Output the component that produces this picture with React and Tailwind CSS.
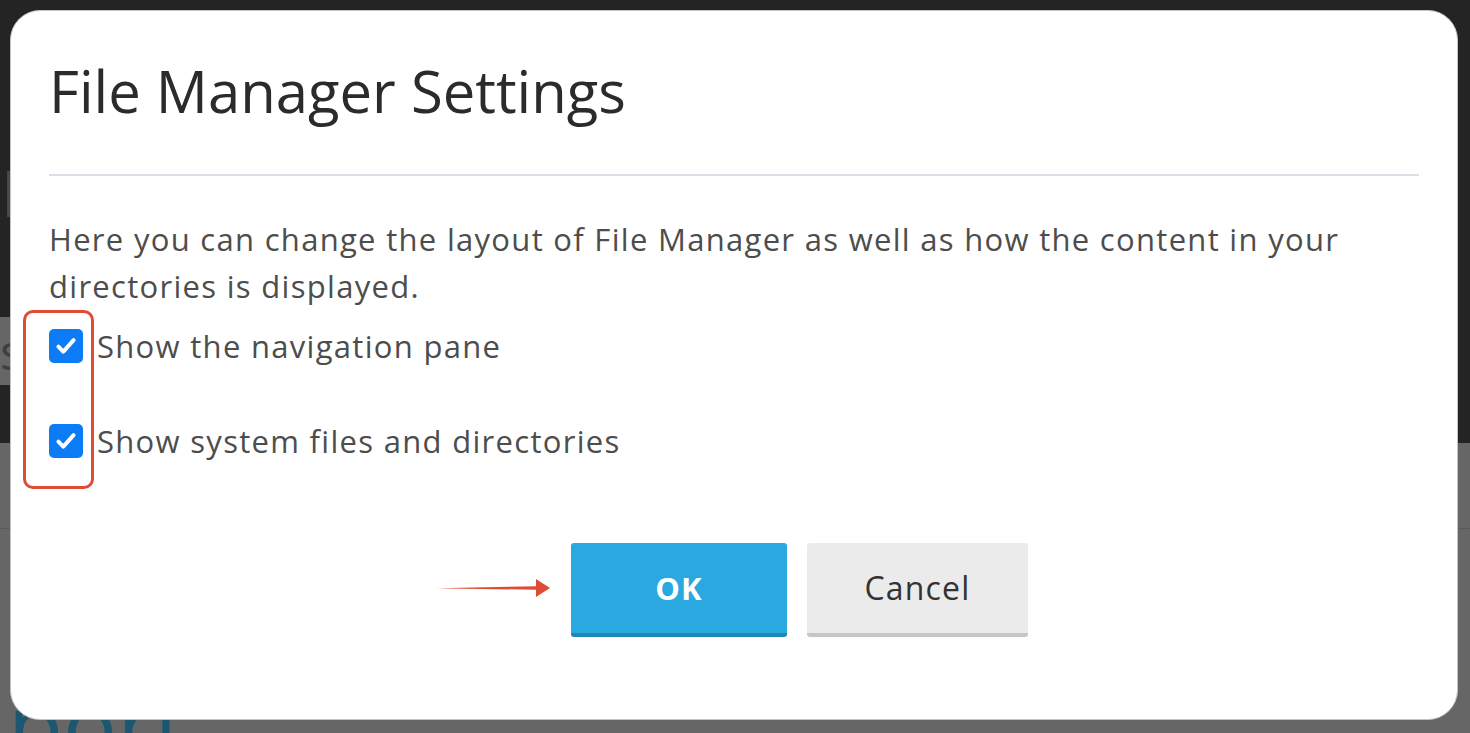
import { useState } from 'react';

function Check({ checked, onChange, label }) {
  return (
    <label className="flex items-center gap-[14px] cursor-pointer select-none">
      <span
        onClick={onChange}
        className={`flex h-[34px] w-[34px] shrink-0 items-center justify-center rounded-[5px] ${
          checked ? 'bg-[#0b7cf5]' : 'bg-white border-2 border-[#888]'
        }`}
      >
        {checked && (
          <svg viewBox="0 0 24 24" className="h-[28px] w-[28px]" fill="none">
            <path d="M5.5 12.5l4.2 4.3L18.5 7" stroke="white" strokeWidth="3.4" strokeLinecap="round" strokeLinejoin="round" />
          </svg>
        )}
      </span>
      <span className="text-[31px] tracking-[1.3px] text-[#4d4d4d]">{label}</span>
    </label>
  );
}

export default function App() {
  const [nav, setNav] = useState(true);
  const [sys, setSys] = useState(true);

  return (
    <div className="relative h-[733px] w-[1470px] overflow-hidden bg-[#666666]" style={{ fontFamily: '"Open Sans", "Noto Sans", sans-serif' }}>
      {/* backdrop page */}
      <div className="flex h-full flex-col">
        <div className="h-[317px] bg-[#242424]">
          <div className="pt-[150px] pl-[2px] text-[60px] leading-none text-[#4a4a4a]">p</div>
        </div>
        <div className="flex h-[68px]">
          <div className="w-[30px] bg-[#666666] text-[50px] leading-[68px] text-[#3e3e3e]">s</div>
          <div className="flex-1 bg-[#242424]" />
        </div>
        <div className="h-[58px] bg-[#242424]" />
        <div className="flex flex-1 flex-col justify-end">
          <div className="h-[1px] bg-[#5a5a5a] mb-[164px]" />
          <div className="pl-[8px] text-[90px] leading-[60px] text-[#1d5670] -mb-[20px]">port</div>
        </div>
      </div>

      {/* modal */}
      <div className="absolute left-[10px] top-[10px] h-[710px] w-[1448px] rounded-[30px] border border-[#c4c4c4] bg-white px-[38px]">
        <h1 className="pt-[44px] text-[58px] leading-[72px] text-[#2b2b2b]">File Manager Settings</h1>
        <div className="mt-[47px] h-[2px] bg-[#dedde8]" />
        <p className="mt-[40px] pr-[30px] text-[31px] leading-[47px] tracking-[1.3px] text-[#4d4d4d]">
          Here you can change the layout of File Manager as well as how the content in your directories is displayed.
        </p>
        <div className="mt-[13px] flex flex-col gap-[48px]">
          <Check checked={nav} onChange={() => setNav(!nav)} label="Show the navigation pane" />
          <Check checked={sys} onChange={() => setSys(!sys)} label="Show system files and directories" />
        </div>
        <div className="mt-[79px] flex gap-[20px] pl-[522px]">
          <button className="h-[94px] w-[216px] rounded-[3px] border-b-[4px] border-[#1f86b8] bg-[#29a9df] text-[31px] font-bold tracking-[1px] text-white">
            OK
          </button>
          <button className="h-[94px] w-[221px] rounded-[3px] border-b-[4px] border-[#c6c6c6] bg-[#ebebeb] text-[32px] tracking-[1.2px] text-[#333]">
            Cancel
          </button>
        </div>
      </div>

      {/* annotations */}
      <div className="absolute left-[23px] top-[310px] h-[179px] w-[71px] rounded-[10px] border-[3px] border-[#e04b35]" />
      <svg className="absolute left-[436px] top-[576px]" width="116" height="24" viewBox="0 0 116 24">
        <path d="M0 12.2 L100 10.2 L100 3 L114 12 L100 21 L100 13.8 Z" fill="#e04b35" />
      </svg>
    </div>
  );
}
